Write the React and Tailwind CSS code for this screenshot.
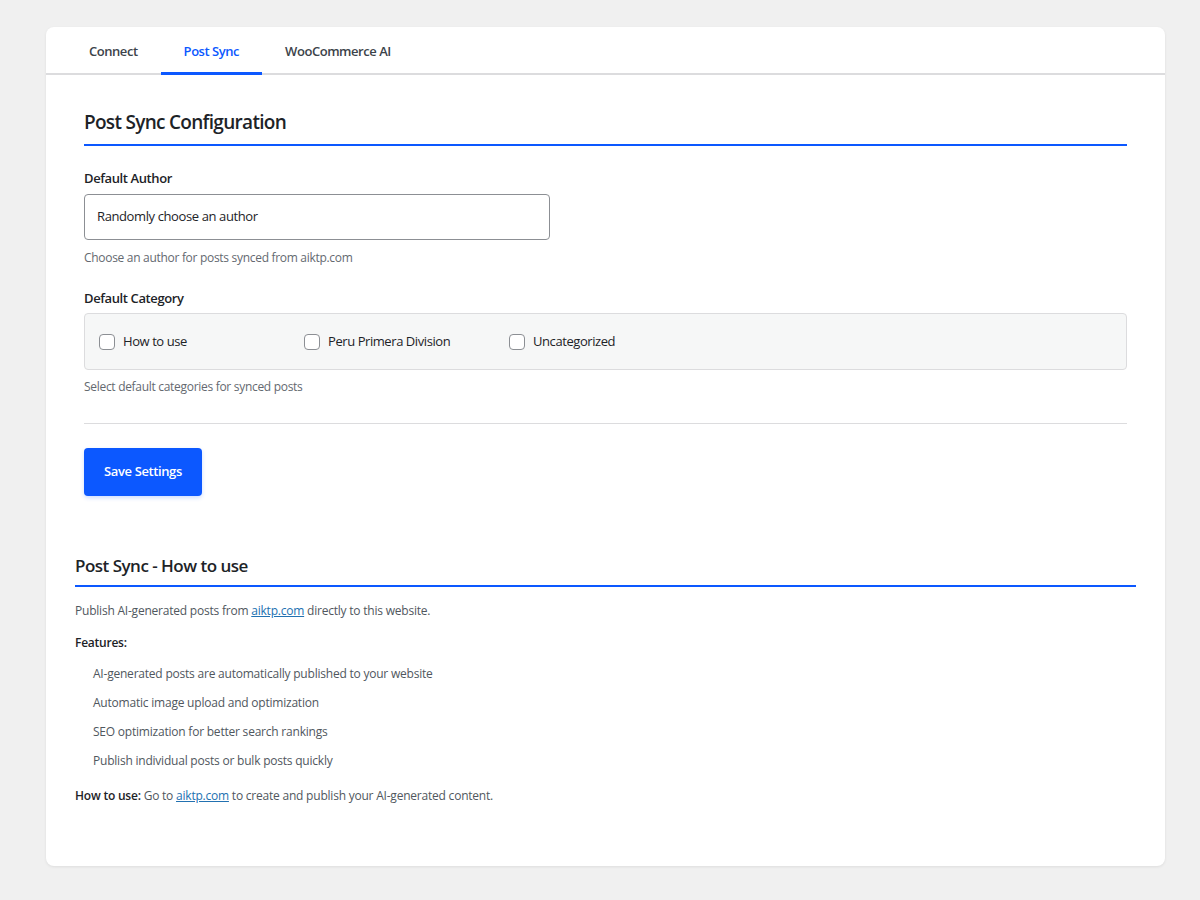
import React from "react";

const font = { fontFamily: '"Segoe UI", "Open Sans", "Noto Sans", sans-serif' };

function Checkbox({ label }) {
  return (
    <label className="flex items-center gap-2 w-[205px] cursor-pointer">
      <span className="w-4 h-4 rounded-[4px] border border-[#8c8f94] bg-white shrink-0"></span>
      <span className="text-[13px] text-[#1d2327] tracking-[-0.033em]">{label}</span>
    </label>
  );
}

export default function App() {
  return (
    <div className="min-h-[900px] bg-[#f0f0f0] pt-[27px] pl-[46px] pr-[35px]" style={font}>
      <div className="bg-white rounded-lg shadow-[0_1px_3px_rgba(0,0,0,0.08)] h-[839px] w-[1119px]">
        {/* Tabs */}
        <div className="flex pl-[20px] border-b-2 border-[#dcdcde] h-[48px]">
          {["Connect", "Post Sync", "WooCommerce AI"].map((t) => {
            const active = t === "Post Sync";
            return (
              <div
                key={t}
                className={
                  "px-[23px] pt-[5px] flex items-center text-[13px] font-semibold tracking-[-0.035em] -mb-[2px] border-b-[3px] " +
                  (active ? "text-[#0c58ff] border-[#0c58ff]" : "text-[#3c434a] border-transparent")
                }
              >
                {t}
              </div>
            );
          })}
        </div>

        <div className="px-[29px]">
          {/* Config section */}
          <div className="px-[9px] pt-[34px]">
            <h2 className="text-[19px] font-semibold text-[#1d2327] pb-[9px] border-b-2 border-[#0c58ff] leading-[26px] tracking-[-0.037em]">
              Post Sync Configuration
            </h2>

            <div className="mt-[23px]">
              <div className="text-[13px] font-semibold text-[#1d2327] leading-[18px] tracking-[-0.03em]">Default Author</div>
              <div className="mt-[7px] w-[466px] h-[46px] border border-[#8c8f94] rounded-[4px] flex items-center px-[12px] text-[13px] text-[#1d2327] tracking-[-0.03em]">
                Randomly choose an author
              </div>
              <div className="mt-[10px] text-[12px] text-[#646970] leading-[16px] tracking-[-0.025em]">
                Choose an author for posts synced from aiktp.com
              </div>
            </div>

            <div className="mt-[23px]">
              <div className="text-[13px] font-semibold text-[#1d2327] leading-[18px] tracking-[-0.03em]">Default Category</div>
              <div className="mt-[6px] h-[57px] border border-[#dcdcde] bg-[#f6f7f7] rounded-[4px] flex items-center px-[14px]">
                <Checkbox label="How to use" />
                <Checkbox label="Peru Primera Division" />
                <Checkbox label="Uncategorized" />
              </div>
              <div className="mt-[9px] text-[12px] text-[#646970] leading-[16px] tracking-[-0.025em]">
                Select default categories for synced posts
              </div>
            </div>

            <div className="mt-[28px] border-t border-[#dcdcde]"></div>

            <button className="mt-[24px] w-[118px] h-[48px] bg-[#0c58ff] rounded-[4px] text-white text-[13px] font-semibold tracking-[-0.03em] shadow-[0_2px_4px_rgba(12,88,255,0.2)]">
              Save Settings
            </button>
          </div>

          {/* How to use */}
          <div className="mt-[58px]">
            <h3 className="text-[17px] font-semibold text-[#1d2327] pb-[7px] border-b-2 border-[#0c58ff] leading-[24px] tracking-[-0.03em]">
              Post Sync - How to use
            </h3>
            <p className="mt-[15px] text-[12px] text-[#50575e] leading-[18px] tracking-[-0.018em]">
              Publish AI-generated posts from{" "}
              <a className="text-[#2271b1] underline">aiktp.com</a> directly to this website.
            </p>
            <p className="mt-[14px] text-[12px] font-semibold text-[#1d2327] leading-[18px] tracking-[-0.02em]">Features:</p>
            <ul className="mt-[13px] pl-[18px] text-[12px] text-[#50575e] leading-[18px] tracking-[-0.018em] flex flex-col gap-[11px]">
              <li>AI-generated posts are automatically published to your website</li>
              <li>Automatic image upload and optimization</li>
              <li>SEO optimization for better search rankings</li>
              <li>Publish individual posts or bulk posts quickly</li>
            </ul>
            <p className="mt-[17px] text-[12px] text-[#50575e] leading-[18px] tracking-[-0.018em]">
              <span className="font-semibold text-[#1d2327]">How to use:</span> Go to{" "}
              <a className="text-[#2271b1] underline">aiktp.com</a> to create and publish your AI-generated content.
            </p>
          </div>
        </div>
      </div>
    </div>
  );
}
